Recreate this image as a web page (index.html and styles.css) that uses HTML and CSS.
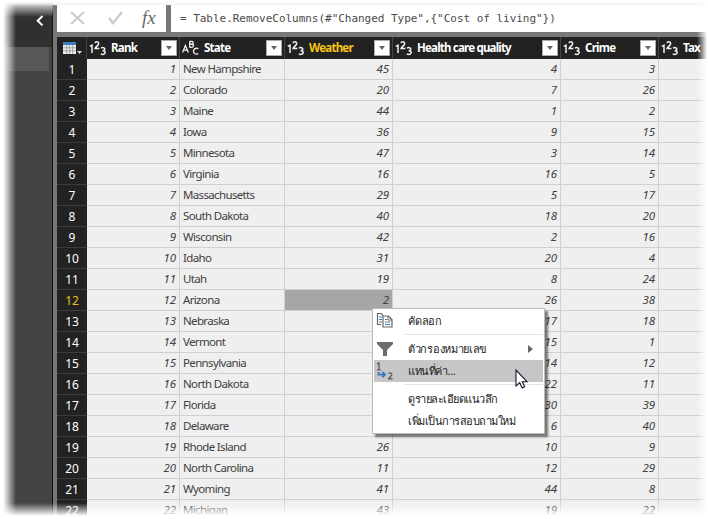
FILE: index.html
```html
<!DOCTYPE html>
<html lang="th">
<head>
<meta charset="utf-8">
<title>Query Editor</title>
<link rel="stylesheet" href="styles.css">
</head>
<body>
<svg width="0" height="0" class="defs">
<defs>
<g id="num" fill="none" stroke="#f0f0f0" stroke-width="1.5"><path d="M.8 6.4 3 5.2V13M6 3.2C6.4 1.4 9.7 1.3 9.7 3.6 9.7 5.3 7 6.5 6.2 8.4H10.4M12 8.1c1.5-1 3.8-.5 3.8 1 0 1.2-1.2 1.6-2.2 1.6 1.4 0 2.6.6 2.6 1.9 0 1.8-2.8 2.3-4.4 1.3"/></g>
<g id="abc" fill="none" stroke="#f0f0f0" stroke-width="1.3"><path d="M.6 12.6 3.4 5.4 6.3 12.6M1.6 10.2H5.3M7.7 1.2V7.4M7.7 1.3H9.5C11.7 1.3 11.6 4 9.5 4H7.7M9.5 4C12.2 4 12.1 7.3 9.6 7.3H7.7M16.3 8.7C13.6 7.5 11.5 9 11.5 11.2 11.5 13.6 13.8 14.8 16.3 13.7"/></g>
</defs>
</svg>
<div class="app">
<aside class="side">
<div class="side-head"><svg width="8" height="12" viewBox="0 0 8 12"><path d="M6.5 1 1.7 5.7 6.5 10.4" fill="none" stroke="#fff" stroke-width="2"/></svg></div>
<div class="side-item"></div>
</aside>
<main class="main">
<div class="bar">
<div class="tools">
<svg width="109" height="27" viewBox="0 0 109 27"><path d="m14 7 13 12M27 7 14 19" stroke="#ccc" stroke-width="2.2" fill="none"/><path d="m52 13 4 5 9-11" stroke="#ccc" stroke-width="2.4" fill="none"/></svg>
<span class="fx">fx</span>
</div>
<div class="formula">= Table.RemoveColumns(#"Changed Type",{"Cost of living"})</div>
</div>
<table class="grid">
<colgroup><col class="c0"><col class="c1"><col class="c2"><col class="c3"><col class="c4"><col class="c5"><col class="c6"></colgroup>
<thead><tr>
<th class="corner"><svg width="22" height="14" viewBox="0 0 22 14"><path d="M1 1h13v11H1z" fill="#eee"/><path d="M1 0h13v3H1z" fill="#3d7ebf"/><path d="M1 5.8h13M1 8.8h13M4.7 3v9M7.7 3v9M10.7 3v9" stroke="#888" stroke-width=".7"/><path d="M15 9h5l-2.5 3z" fill="#ddd"/></svg></th>
<th><div class="head"><svg class="type" width="17" height="16"><use href="#num"/></svg><span>Rank</span><i class="drop"></i></div></th>
<th><div class="head"><svg class="type" width="17" height="16"><use href="#abc"/></svg><span>State</span><i class="drop"></i></div></th>
<th><div class="head on"><svg class="type" width="17" height="16"><use href="#num"/></svg><span>Weather</span><i class="drop"></i></div></th>
<th><div class="head"><svg class="type" width="17" height="16"><use href="#num"/></svg><span class="long">Health care quality</span><i class="drop"></i></div></th>
<th><div class="head"><svg class="type" width="17" height="16"><use href="#num"/></svg><span>Crime</span><i class="drop"></i></div></th>
<th><div class="head"><svg class="type" width="17" height="16"><use href="#num"/></svg><span>Tax</span></div></th>
</tr></thead>
<tbody>
<tr><th>1</th><td>1</td><td>New Hampshire</td><td>45</td><td>4</td><td>3</td><td></td></tr>
<tr><th>2</th><td>2</td><td>Colorado</td><td>20</td><td>7</td><td>26</td><td></td></tr>
<tr><th>3</th><td>3</td><td>Maine</td><td>44</td><td>1</td><td>2</td><td></td></tr>
<tr><th>4</th><td>4</td><td>Iowa</td><td>36</td><td>9</td><td>15</td><td></td></tr>
<tr><th>5</th><td>5</td><td>Minnesota</td><td>47</td><td>3</td><td>14</td><td></td></tr>
<tr><th>6</th><td>6</td><td>Virginia</td><td>16</td><td>16</td><td>5</td><td></td></tr>
<tr><th>7</th><td>7</td><td>Massachusetts</td><td>29</td><td>5</td><td>17</td><td></td></tr>
<tr><th>8</th><td>8</td><td>South Dakota</td><td>40</td><td>18</td><td>20</td><td></td></tr>
<tr><th>9</th><td>9</td><td>Wisconsin</td><td>42</td><td>2</td><td>16</td><td></td></tr>
<tr><th>10</th><td>10</td><td>Idaho</td><td>31</td><td>20</td><td>4</td><td></td></tr>
<tr><th>11</th><td>11</td><td>Utah</td><td>19</td><td>8</td><td>24</td><td></td></tr>
<tr><th class="current">12</th><td>12</td><td>Arizona</td><td class="picked">2</td><td>26</td><td>38</td><td></td></tr>
<tr><th>13</th><td>13</td><td>Nebraska</td><td></td><td>17</td><td>18</td><td></td></tr>
<tr><th>14</th><td>14</td><td>Vermont</td><td></td><td>15</td><td>1</td><td></td></tr>
<tr><th>15</th><td>15</td><td>Pennsylvania</td><td></td><td>14</td><td>12</td><td></td></tr>
<tr><th>16</th><td>16</td><td>North Dakota</td><td></td><td>22</td><td>11</td><td></td></tr>
<tr><th>17</th><td>17</td><td>Florida</td><td></td><td>30</td><td>39</td><td></td></tr>
<tr><th>18</th><td>18</td><td>Delaware</td><td></td><td>6</td><td>40</td><td></td></tr>
<tr><th>19</th><td>19</td><td>Rhode Island</td><td>26</td><td>10</td><td>9</td><td></td></tr>
<tr><th>20</th><td>20</td><td>North Carolina</td><td>11</td><td>12</td><td>29</td><td></td></tr>
<tr><th>21</th><td>21</td><td>Wyoming</td><td>41</td><td>44</td><td>8</td><td></td></tr>
<tr><th>22</th><td>22</td><td>Michigan</td><td>43</td><td>19</td><td>22</td><td></td></tr>
</tbody>
</table>
</main>
<div class="menu">
<div class="item"><svg width="18" height="18" viewBox="0 0 18 18"><path d="M5 12.5H1.5v-11H5l2 2" fill="#fff" stroke="#666" stroke-width="1.2"/><path d="M3 5h3M3 7.5h3M3 10h3" stroke="#3d7ebf"/><path d="M7 4h5.5l3.5 3.5v7.5H7z" fill="#fff" stroke="#666" stroke-width="1.2"/><path d="M12 4v4h4" fill="none" stroke="#666"/><path d="M9 7.5h2M9 10h5M9 12.5h5" stroke="#3d7ebf"/></svg><span class="m1">คัดลอก</span></div>
<hr>
<div class="item"><svg width="18" height="18" viewBox="0 0 18 18"><path d="M1 2h16v2l-6 6v6H7v-6L1 4z" fill="#6c6c6c"/></svg><span class="m2">ตัวกรองหมายเลข</span><svg class="arrow" width="5" height="8"><path d="M0 0 5 4 0 8z" fill="#666"/></svg></div>
<div class="item hot"><svg width="18" height="20" viewBox="0 0 18 20"><path d="M1 3 3 2v7M1 9h4" fill="none" stroke="#555" stroke-width="1.2"/><path d="M2.6 11v2.6h6M6.3 10.8l2.8 2.8-2.8 2.8" fill="none" stroke="#3d76b5" stroke-width="1.8"/><path d="M12.7 12.6c1-1.2 3.5-.8 3.2 1C15.7 15 13.2 16.2 12.6 17.8h4" fill="none" stroke="#555" stroke-width="1.2"/></svg><span class="m3">แทนที่ค่า...</span></div>
<hr>
<div class="item last"><span class="m4">ดูรายละเอียดแนวลึก</span></div>
<div class="item last"><span class="m5">เพิ่มเป็นการสอบถามใหม่</span></div>
</div>
<svg class="cursor" width="14" height="20" viewBox="0 0 14 20"><path d="M1 1v16l3.7-3.3 2.5 5.2 2.5-1.2-2.4-5H12z" fill="#fff" stroke="#15152a" stroke-width="1.1"/></svg>
<div class="fade"></div>
</div>
</body>
</html>
```
FILE: styles.css
```css
* { box-sizing: border-box; }
body { margin: 0; background: #fff; font-family: "Noto Sans", "Open Sans", sans-serif; }
.defs { position: absolute; }
.app { position: relative; display: flex; width: 708px; height: 519px; overflow: hidden; }
.side { width: 53px; flex: none; background: #444; border-right: 1px solid #111; }
.side-head { height: 47px; background: #303030; padding: 15px 0 0 36px; line-height: 0; }
.side-item { height: 24px; width: 49px; background: #575757; }
.main { width: 655px; flex: none; background: #777; padding-left: 4px; border-top: 5px solid #eee; }
.bar { display: flex; gap: 5px; height: 32px; padding-bottom: 5px; }
.tools { display: flex; position: relative; width: 109px; background: #fff; }
.fx { position: absolute; left: 85px; top: 0; font: italic 19px/25px "Liberation Serif", serif; color: #666; }
.formula { flex: 1; background: #fff; padding-left: 9px; font: 11px/27px "DejaVu Sans Mono", monospace; letter-spacing: -.03px; color: #4a4a4a; white-space: pre; }
.grid { border-collapse: separate; border-spacing: 0; table-layout: fixed; width: 651px; }
.c0 { width: 30px; } .c1 { width: 93px; } .c2 { width: 105px; } .c3 { width: 108px; } .c4 { width: 168px; } .c5 { width: 98px; } .c6 { width: 49px; }
.grid th, .grid td { padding: 0; overflow: hidden; white-space: nowrap; }
thead th { height: 22px; background: #222; border-right: 1px solid #444; }
thead .corner { padding: 2px 0 0 5px; line-height: 0; text-align: left; }
.head { display: flex; align-items: center; height: 22px; padding-left: 2px; color: #fff; font-size: 11.5px; letter-spacing: -.75px; }
.head span { line-height: 20px; padding-bottom: 1px; }
.head .long { letter-spacing: -.8px; }
.head .type { flex: none; margin-right: 5px; }
.on { color: #f5c518; }
.drop { width: 16px; height: 16px; margin: 0 2px 0 auto; flex: none; background: #fff; border: 1px solid #aaa; display: flex; align-items: center; justify-content: center; }
.drop::after { content: ""; border: 3px solid transparent; border-top: 4px solid #666; border-bottom: 0; }
tbody th { height: 21px; background: #222; border-bottom: 1px solid #3c3c3c; color: #fff; font-size: 12px; line-height: 19px; font-weight: 400; }
.grid tbody th { padding-top: 1px; }
tbody th.current { color: #e8c020; }
tbody td { height: 21px; background: #efefef; border-right: 1px solid #d0d0d0; border-bottom: 1px solid #d0d0d0; color: #404040; font-size: 11.5px; line-height: 20px; font-style: italic; text-align: right; vertical-align: top; letter-spacing: -.1px; }
.grid tbody td:nth-child(n+2) { padding-right: 3px; }
.grid tbody td:nth-child(3) { font-style: normal; text-align: left; padding-left: 3px; letter-spacing: -.65px; }
tbody td.picked { background: #a6a6a6; }
.menu { position: absolute; left: 372px; top: 308px; width: 173px; height: 126px; background: #fff; border: 1px solid #bbb; padding: 1px; box-shadow: 3px 3px 2px rgba(0,0,0,.5); color: #222; font-size: 11px; }
.item { display: flex; align-items: center; height: 22px; padding-left: 2px; }
.item span { margin-left: 14px; line-height: 22px; white-space: nowrap; }
.item.last span { margin-left: 32px; }
.m1 { letter-spacing: -.2px; }
.m2 { letter-spacing: -.3px; }
.m3 { letter-spacing: -.4px; }
.m4 { letter-spacing: -.5px; }
.m5 { letter-spacing: -.5px; }
.arrow { margin: 0 10px 0 auto; }
.hot { background: #c6c6c6; }
.menu hr { border: 0; height: 1px; background: #e2e2e2; margin: 2px 0 3px 31px; }
.cursor { position: absolute; left: 515px; top: 369px; }
.fade { position: absolute; inset: 0; background: linear-gradient(to right, #fff 3px, rgba(255,255,255,0) 16px, rgba(255,255,255,0) 697px, #fff 707px), linear-gradient(to bottom, #fff 0, rgba(255,255,255,0) 17px) 0 0 / 53px 519px no-repeat, linear-gradient(to bottom, #fff 1px, rgba(255,255,255,0) 6px, rgba(255,255,255,0) 503px, #fff 516px); }
```
